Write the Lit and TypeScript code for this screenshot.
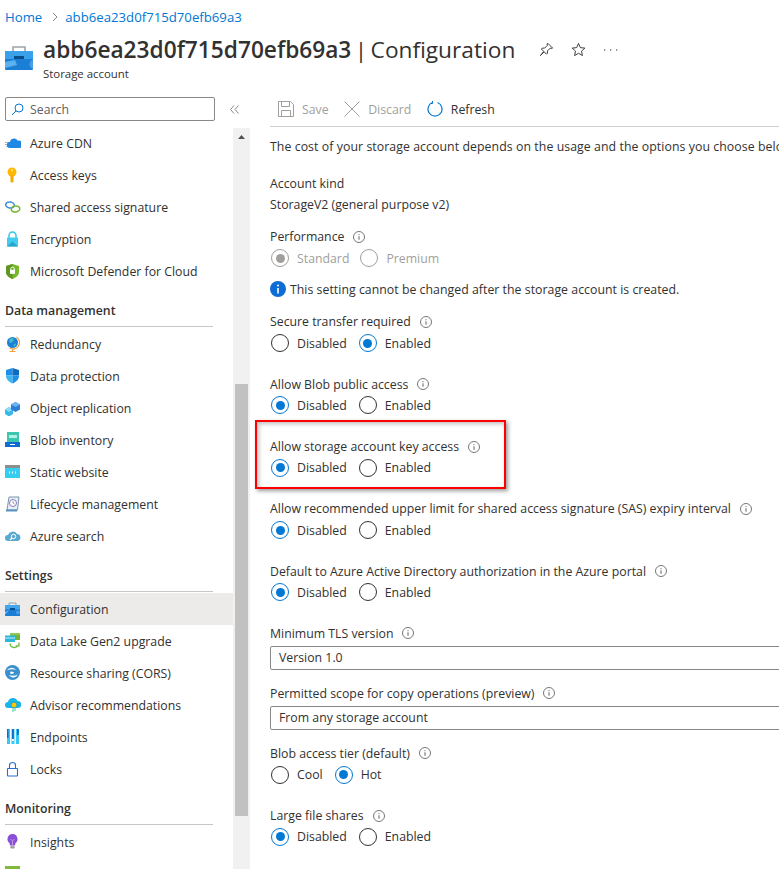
import { LitElement, html, css, svg } from 'lit';
import { customElement } from 'lit/decorators.js';

const icons: Record<string, unknown> = {
  cdn: svg`<path d="M0 7.500h4M0 9.500h3M1 11.500h3" stroke="#a9b4bc"/><path d="M5 13a3 3 0 0 1-.2-6 4.300 4.300 0 0 1 8-1.200A3.600 3.600 0 0 1 15 13z" fill="#1e88e5"/>`,
  key: svg`<circle cx="7" cy="5" r="4.500" fill="#ffb900"/><path d="M5.500 8h3v6.500L7 16l-1.500-1.500z" fill="#f7a800"/><circle cx="7" cy="3.200" r="1" fill="#ffe9a8"/>`,
  link: svg`<ellipse cx="5" cy="6" rx="4.300" ry="3" transform="rotate(8 5 6)" fill="none" stroke="#3f8fd8" stroke-width="1.500"/><ellipse cx="10.500" cy="10" rx="4.300" ry="3" transform="rotate(-8 10.500 10)" fill="none" stroke="#76b82a" stroke-width="1.500"/>`,
  lock: svg`<path d="M4 7V4.500a3.500 3.500 0 0 1 7 0V7" fill="none" stroke="#35c8f0" stroke-width="1.500"/><rect x="2" y="6.500" width="11" height="9" rx=".5" fill="#40cdf0"/><path d="M2 15.500l5.500-5 5.500 5z" fill="#2aa5cc"/>`,
  defender: svg`<path d="M7.500 1l6.500 2v6c0 3.500-3 5.500-6.500 7C4 14.500 1 12.500 1 9V3z" fill="#76b82a"/><path d="M7.500 1L1 3v6c0 3.500 3 5.500 6.500 7z" fill="#5e9624"/><path d="M5.800 7V5.800a1.700 1.700 0 0 1 3.400 0V7" fill="none" stroke="#fff"/><rect x="5" y="6.800" width="5" height="4" fill="#fff"/>`,
  globe: svg`<circle cx="7.500" cy="6.500" r="5.500" fill="#1f7fd6"/><path d="M5 2.500l3-.5 1 2-3 3-2-1zM9 8l2-.5-1 3-1.500-.5z" fill="#3fc0c9"/><path d="M11.500 1a6.500 6.500 0 0 1-7 11M7.500 13v2M4.500 15.500h6" fill="none" stroke="#f2a13c" stroke-width="1.200"/>`,
  shield: svg`<path d="M7.500 0L1 2v5.500h6.500z" fill="#1e8fe6"/><path d="M7.500 0L14 2v5.500H7.500z" fill="#0f6cbd"/><path d="M1 7.500c0 4 3 6.500 6.500 8V7.500z" fill="#3bb8ef"/><path d="M14 7.500c0 4-3 6.500-6.500 8V7.500z" fill="#1e8fe6"/>`,
  replication: svg`<path d="M0 9.500l4-2.500 4 2.500v4.500L4 16.500 0 14z" fill="#35b8ea"/><path d="M0 9.500L4 12l4-2.500L4 7z" fill="#8fdcf7"/><path d="M6 4.500L10.500 2 15 4.500v5l-4.500 2.500L6 9.500z" fill="#2d7ed6"/><path d="M6 4.500L10.500 7 15 4.500 10.500 2z" fill="#6fb3ee"/>`,
  inventory: svg`<rect x="2" y="0" width="12" height="11" fill="#3ac7ae"/><rect x="4" y="3" width="8" height="3" fill="#b6efe3"/><rect x="0" y="10" width="15" height="5" fill="#0f6cd0"/><path d="M5 12.500h5" stroke="#fff"/>`,
  website: svg`<rect x="0" y="1" width="15" height="13" fill="#36cdf0"/><rect x="0" y="1" width="15" height="3" fill="#8d8d8d"/><path d="M4 8.500h1M7 8.500h1M10 8.500h1" stroke="#fff" stroke-width="2"/>`,
  lifecycle: svg`<path d="M4 1h10l-1.500 13H2z" fill="#e6eff7" stroke="#7b94ad"/><circle cx="8" cy="7" r="3.500" fill="#fff" stroke="#8a7bb5"/><path d="M8 5v2l1.500 1" fill="none" stroke="#8a7bb5" stroke-width=".8"/><path d="M1 13.500h11v2H1z" fill="#5b93c0"/>`,
  search: svg`<path d="M3 13a3 3 0 0 1 0-6 5 5 0 0 1 9-1 3.600 3.600 0 0 1 1 7z" fill="#59a9cf"/><circle cx="8.500" cy="8.500" r="2.200" fill="none" stroke="#fff"/><path d="M7 10l-2 2" stroke="#fff" stroke-width="1.200"/>`,
  config: svg`<path d="M4 4.500V2h7v2.500" fill="none" stroke="#8ba0b2"/><rect x="0" y="4" width="15" height="11" rx=".5" fill="#1b7fd6"/><rect x="0" y="4" width="15" height="4.500" fill="#42a5ee"/><rect x="5" y="7" width="5" height="2" fill="#004f90"/><path d="M0 11l4-1.500-4 4z" fill="#7cc4f2"/><circle cx="13" cy="11.500" r="2" fill="#4b9ee6"/>`,
  lake: svg`<rect x="5" y="0" width="10" height="7" fill="#6fb33a"/><rect x="5" y="0" width="10" height="2" fill="#8fcb52"/><rect x="0" y="2.500" width="10" height="6.500" fill="#2fb5dc"/><path d="M0 5h10" stroke="#c4eef7"/><path d="M5 10.500a4.300 4.300 0 0 0 8 2M14 9.500v3.300h-3.300" fill="none" stroke="#6cc03a" stroke-width="1.300"/>`,
  cors: svg`<circle cx="7.500" cy="7.500" r="7.500" fill="#3a90cc"/><path d="M2 5.500c2.500-4 7-3.500 9-.5-2.500-1-6-1-9 .5zM13 9.500c-2.500 4-7 3.500-9 .5 2.500 1 6 1 9-.5z" fill="#fff"/><path d="M5.500 6.500l3.500.5-1 2-3-.5z" fill="#fff"/>`,
  advisor: svg`<path d="M3 11a3 3 0 0 1 0-6 5 5 0 0 1 9.500-1A3.500 3.500 0 0 1 13 11z" fill="#18b4ea"/><circle cx="9" cy="8" r="2.800" fill="#ffc800" stroke="#0f8fd0" stroke-width=".6"/><path d="M7.500 11h1v4h-1zM9.500 11h1v3h-1z" fill="#36c9a5"/>`,
  endpoints: svg`<rect x="2" y="0" width="3" height="15" fill="#35c8f0"/><rect x="2" y="0" width="1.500" height="9" fill="#0f6cd0"/><rect x="6.500" y="0" width="3" height="15" fill="#35c8f0"/><rect x="7" y="0" width="1.800" height="10" fill="#0f6cd0"/><rect x="7" y="10" width="1.800" height="2" fill="#fff"/><rect x="11" y="0" width="3" height="15" fill="#35c8f0"/><rect x="12" y="0" width="1.800" height="6" fill="#0f6cd0"/>`,
  locks: svg`<path d="M4.500 7.500v-3a3 3 0 0 1 6 0v3" fill="none" stroke="#2a6fc9" stroke-width="1.100"/><rect x="2.500" y="7.500" width="10" height="7.500" rx=".5" fill="#fff" stroke="#2a6fc9" stroke-width="1.100"/>`,
  insights: svg`<path d="M7.500 0a5 5 0 0 1 3 9l-.5 2.500H5L4.500 9a5 5 0 0 1 3-9z" fill="#8a4fd6"/><path d="M5.500 5l2 2 2-2M7.500 7v4" fill="none" stroke="#c9a8f0" stroke-width=".8"/><rect x="5.300" y="12" width="4.400" height="2.500" rx=".8" fill="#a0a0a0"/>`,
  logs: svg`<rect x="0" y="0" width="15" height="16" fill="#7fba3a"/><path d="M0 5h15" stroke="#d7eab8"/>`,
};

interface NavItem { label: string; icon: string; active?: boolean }
interface NavSection { title?: string; items: NavItem[] }

const nav: NavSection[] = [
  { items: [
    { label: 'Azure CDN', icon: 'cdn' },
    { label: 'Access keys', icon: 'key' },
    { label: 'Shared access signature', icon: 'link' },
    { label: 'Encryption', icon: 'lock' },
    { label: 'Microsoft Defender for Cloud', icon: 'defender' },
  ] },
  { title: 'Data management', items: [
    { label: 'Redundancy', icon: 'globe' },
    { label: 'Data protection', icon: 'shield' },
    { label: 'Object replication', icon: 'replication' },
    { label: 'Blob inventory', icon: 'inventory' },
    { label: 'Static website', icon: 'website' },
    { label: 'Lifecycle management', icon: 'lifecycle' },
    { label: 'Azure search', icon: 'search' },
  ] },
  { title: 'Settings', items: [
    { label: 'Configuration', icon: 'config', active: true },
    { label: 'Data Lake Gen2 upgrade', icon: 'lake' },
    { label: 'Resource sharing (CORS)', icon: 'cors' },
    { label: 'Advisor recommendations', icon: 'advisor' },
    { label: 'Endpoints', icon: 'endpoints' },
    { label: 'Locks', icon: 'locks' },
  ] },
  { title: 'Monitoring', items: [
    { label: 'Insights', icon: 'insights' },
    { label: '', icon: 'logs' },
  ] },
];

const info = html`<svg class="info" viewBox="0 0 12 12"><circle cx="6" cy="6" r="5.500" fill="none" stroke="#797775"/><path d="M6 5.300v3.400" stroke="#605e5c"/><path d="M6 3.200v1" stroke="#605e5c"/></svg>`;

@customElement('app-root')
export class AppRoot extends LitElement {
  static styles = css`
    :host {
      display: block;
      width: 779px;
      height: 869px;
      overflow: hidden;
      background: #fff;
      color: #323130;
      font-family: "Open Sans", "Noto Sans", sans-serif;
      font-size: 12.3px;
    }

    .crumbs {
      display: flex;
      align-items: center;
      height: 34px;
      padding-left: 5px;
      color: #0078d4;
      font-size: 13.2px;
    }
    .crumbs svg { width: 6px; height: 10px; margin: 0 7px 0 10px; }

    .header { display: flex; height: 63px; }
    .logo { width: 28px; height: 28px; margin: 11px 10px 0 5px; }
    .title-line { display: flex; align-items: center; height: 32px; margin-top: -1px; }
    .title { font-size: 22.7px; white-space: nowrap; word-spacing: -2.5px; }
    .title b { font-weight: 600; }
    .actions { display: flex; align-items: center; margin-left: 24px; gap: 17px; }
    .actions svg { width: 15px; height: 15px; display: block; }
    .subtitle { font-size: 11.4px; margin-top: 1px; }

    .body { display: flex; height: 772px; }

    .sidebar { width: 250px; flex: none; display: flex; flex-direction: column; }
    .search-row { display: flex; align-items: center; height: 24px; margin-bottom: 6px; padding-left: 5px; }
    .search {
      display: flex;
      align-items: center;
      gap: 6px;
      box-sizing: border-box;
      width: 210px;
      height: 24px;
      padding-left: 5px;
      border: 1px solid #8a8886;
      border-radius: 2px;
      color: #605e5c;
    }
    .search svg { width: 13px; height: 13px; }
    .collapse { width: 9px; height: 9px; margin-left: 15px; }

    .side-body { display: flex; flex: 1; min-height: 0; }
    .nav { width: 233px; flex: none; overflow: hidden; }
    .section-title {
      box-sizing: border-box;
      height: 40px;
      margin: 0 20px 1px 5px;
      padding-top: 15px;
      border-bottom: 1px solid #c8c6c4;
      font-weight: 600;
      line-height: 18px;
    }
    .item { display: flex; align-items: center; height: 32px; padding-left: 5px; white-space: nowrap; }
    .item.active { background: #edebe9; }
    .item svg { width: 16px; height: 16px; margin-right: 9px; flex: none; }

    .track {
      width: 17px;
      flex: none;
      margin-top: 1px;
      background: #f1f1f1;
      display: flex;
      flex-direction: column;
      align-items: center;
    }
    .track .up { width: 7px; height: 4px; margin-top: 7px; }
    .thumb { width: 13px; height: 432px; margin-top: 245px; background: #c1c1c1; }

    .main { flex: 1; min-width: 0; padding-left: 20px; overflow: hidden; white-space: nowrap; }
    .toolbar {
      display: flex;
      align-items: center;
      box-sizing: border-box;
      height: 30px;
      padding: 0 0 5px 8px;
      border-bottom: 1px solid #d2d0ce;
    }
    .tool { display: flex; align-items: center; gap: 8px; margin-right: 15.5px; color: #a19f9d; }
    .tool.enabled { color: #323130; }
    .tool svg { width: 16px; height: 16px; }

    .content { position: relative; width: 620px; padding-top: 9px; }
    .line { height: 21px; line-height: 21px; display: flex; align-items: center; }
    .cost { letter-spacing: 0.07px; }
    .block { margin-top: 16px; }
    .perf { margin-top: 11px; }
    .field { height: 62.3px; }
    .field.tight { height: 60px; }
    .label { display: flex; align-items: center; height: 21.5px; }
    .info { width: 12px; height: 12px; margin-left: 9px; }

    .radios { display: flex; align-items: center; height: 21px; margin-left: 1px; }
    .radio { display: flex; align-items: center; gap: 8px; margin-right: 12px; }
    .radio.off { color: #a19f9d; margin-right: 11px; }
    .dot {
      box-sizing: border-box;
      width: 18px;
      height: 18px;
      border: 1px solid #323130;
      border-radius: 50%;
      display: flex;
      align-items: center;
      justify-content: center;
    }
    .radio.on .dot { border-color: #0078d4; }
    .radio.on .dot::after { content: ''; width: 9px; height: 9px; border-radius: 50%; background: #0078d4; }
    .radio.off .dot { border-color: #a19f9d; }
    .radio.off.on .dot::after { background: #a19f9d; }

    .note { display: flex; align-items: center; gap: 4px; height: 21px; margin: 10px 0 11.7px; letter-spacing: 0.03px; }
    .note svg { width: 16px; height: 16px; }

    .select {
      box-sizing: border-box;
      display: flex;
      align-items: center;
      height: 24px;
      margin-top: 1.5px;
      padding-left: 8px;
      border: 1px solid #8a8886;
      border-radius: 2px;
    }

    .callout {
      position: absolute;
      left: -15px;
      top: 293px;
      box-sizing: border-box;
      width: 251px;
      height: 69px;
      border: 2px solid #ff0000;
      box-shadow: 2px 2px 4px rgba(0, 0, 0, 0.4), inset 2px 2px 4px rgba(0, 0, 0, 0.25);
      pointer-events: none;
    }
  `;

  renderRadios(options: string[], selected: number, disabled = false) {
    return html`<div class="radios">
      ${options.map((o, i) => html`
        <span class="radio ${i === selected ? 'on' : ''} ${disabled ? 'off' : ''}"><span class="dot"></span>${o}</span>
      `)}
    </div>`;
  }

  renderToggle(label: string, selected: number, options = ['Disabled', 'Enabled']) {
    return html`<div class="field">
      <div class="label">${label}${info}</div>
      ${this.renderRadios(options, selected)}
    </div>`;
  }

  renderSelect(label: string, value: string) {
    return html`<div class="field tight">
      <div class="label">${label}${info}</div>
      <div class="select">${value}</div>
    </div>`;
  }

  render() {
    return html`
      <div class="crumbs">
        <span>Home</span>
        <svg viewBox="0 0 6 10"><path d="M1 1l4 4-4 4" fill="none" stroke="#8a8886"/></svg>
        <span>abb6ea23d0f715d70efb69a3</span>
      </div>
      <div class="header">
        <svg class="logo" viewBox="0 0 28 28">
          <path d="M8 7V2h12v5" fill="none" stroke="#9aa5ad" stroke-width="1.600"/>
          <rect x="0" y="6" width="28" height="19" rx="1" fill="#1b7fd6"/>
          <rect x="0" y="6" width="28" height="8" fill="#3aa0ea"/>
          <rect x="9" y="11" width="10" height="3" fill="#0b4f8a"/>
          <path d="M0 17l10-2 2 5-12 3z" fill="#5cb2ee"/>
          <path d="M28 14.500a5 5 0 0 0 0 9.500z" fill="#4b9ee6"/>
        </svg>
        <div>
          <div class="title-line">
            <span class="title"><b>abb6ea23d0f715d70efb69a3</b> | Configuration</span>
            <div class="actions">
              <svg viewBox="0 0 16 16"><path d="M9.500 1.500l5 5-1 .5-1.500-.5-3 3v2.500l-1 1-2.500-2.500L1.500 14.500 5 10 2.500 7.500l1-1H6l3-3-.5-1.500z" fill="none" stroke="#323130"/></svg>
              <svg viewBox="0 0 16 16"><path d="M8 1.500l2 4.500 4.800.5-3.600 3.200 1 4.800L8 12l-4.200 2.500 1-4.800L1.200 6.500 6 6z" fill="none" stroke="#323130"/></svg>
              <svg viewBox="0 0 15 15"><path d="M1 8h1.300M7 8h1.300M13 8h1.300" stroke="#323130"/></svg>
            </div>
          </div>
          <div class="subtitle">Storage account</div>
        </div>
      </div>
      <div class="body">
        <div class="sidebar">
          <div class="search-row">
            <div class="search">
              <svg viewBox="0 0 13 13"><circle cx="8" cy="5" r="4" fill="none" stroke="#0078d4"/><path d="M5 8l-4 4" stroke="#0078d4"/></svg>
              Search
            </div>
            <svg class="collapse" viewBox="0 0 9 9"><path d="M4 .5L.5 4.500 4 8.500M8.500 .5L5 4.500l3.500 4" fill="none" stroke="#8a8886"/></svg>
          </div>
          <div class="side-body">
            <div class="nav">
              ${nav.map(s => html`
                <div class="section">
                  ${s.title ? html`<div class="section-title">${s.title}</div>` : ''}
                  ${s.items.map(i => html`
                    <div class="item ${i.active ? 'active' : ''}">
                      <svg viewBox="0 0 16 16">${icons[i.icon]}</svg>${i.label}
                    </div>
                  `)}
                </div>
              `)}
            </div>
            <div class="track">
              <svg class="up" viewBox="0 0 7 4"><path d="M3.500 0L7 4H0z" fill="#505050"/></svg>
              <div class="thumb"></div>
            </div>
          </div>
        </div>
        <div class="main">
          <div class="toolbar">
            <div class="tool">
              <svg viewBox="0 0 16 16"><path d="M.5.5h12l3 3v12H.5zM3.500.5v5h8v-5M3.500 15.500v-6h9v6" fill="none" stroke="#a19f9d"/></svg>
              Save
            </div>
            <div class="tool">
              <svg viewBox="0 0 16 16"><path d="M.5.5l15 15M15.500.5l-15 15" stroke="#a19f9d"/></svg>
              Discard
            </div>
            <div class="tool enabled">
              <svg viewBox="0 0 16 16"><path d="M10.500 1.500a7 7 0 1 1-5 0" fill="none" stroke="#0078d4" stroke-width="1.200"/><path d="M5.500 0v2.500H3" fill="none" stroke="#0078d4"/></svg>
              Refresh
            </div>
          </div>
          <div class="content">
            <div class="line cost">The cost of your storage account depends on the usage and the options you choose below.</div>
            <div class="line block">Account kind</div>
            <div class="line">StorageV2 (general purpose v2)</div>
            <div class="label perf">Performance${info}</div>
            ${this.renderRadios(['Standard', 'Premium'], 0, true)}
            <div class="note">
              <svg viewBox="0 0 16 16"><circle cx="8" cy="8" r="8" fill="#0f6cd4"/><path d="M8 7v5.500" stroke="#fff" stroke-width="1.600"/><circle cx="8" cy="4.500" r="1" fill="#fff"/></svg>
              This setting cannot be changed after the storage account is created.
            </div>
            ${this.renderToggle('Secure transfer required', 1)}
            ${this.renderToggle('Allow Blob public access', 0)}
            ${this.renderToggle('Allow storage account key access', 0)}
            ${this.renderToggle('Allow recommended upper limit for shared access signature (SAS) expiry interval', 0)}
            ${this.renderToggle('Default to Azure Active Directory authorization in the Azure portal', 0)}
            ${this.renderSelect('Minimum TLS version', 'Version 1.0')}
            ${this.renderSelect('Permitted scope for copy operations (preview)', 'From any storage account')}
            ${this.renderToggle('Blob access tier (default)', 1, ['Cool', 'Hot'])}
            ${this.renderToggle('Large file shares', 0)}
            <div class="callout"></div>
          </div>
        </div>
      </div>
    `;
  }
}
